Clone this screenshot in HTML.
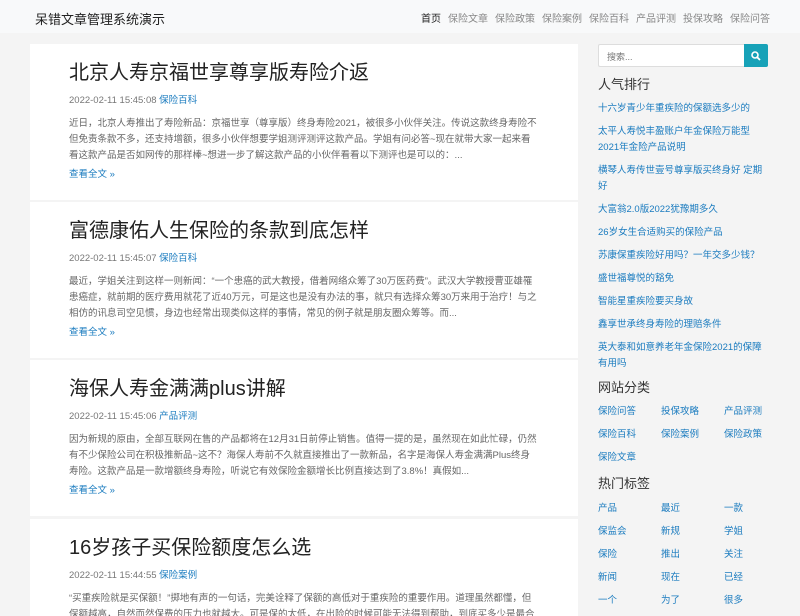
<!DOCTYPE html>
<html><head><meta charset="utf-8"><style>
*{margin:0;padding:0;box-sizing:border-box}
html,body{width:800px;height:616px;overflow:hidden}
body{background:#f4f4f4;font-family:"Liberation Sans","Noto Sans CJK SC",sans-serif;position:relative}
a{color:#1a7bbf;text-decoration:none}
.hdr{position:absolute;left:0;top:0;width:800px;height:33px;background:#f8f9fa}
.logo{position:absolute;left:35px;top:9px;font-size:13px;color:#222}
.nav{position:absolute;right:30px;top:10px;font-size:10px;color:#888;white-space:nowrap}
.nav span{margin-left:7px}
.nav .on{color:#222}
.art{position:absolute;left:30px;width:548px;height:156px;background:#fff;padding:17px 0 0 39px;overflow:hidden}
.art h2{font-size:20px;font-weight:normal;color:#222;line-height:24px;height:24px}
.meta{font-size:9.5px;color:#777;margin-top:9px;line-height:14px}
.ex{font-size:9.5px;color:#666;line-height:16px;margin-top:8px;width:470px;height:48px;overflow:hidden}
.more{font-size:9.5px;margin-top:4px;line-height:14px}
.side{position:absolute;left:598px;top:44px;width:190px}
.search{height:23px;display:flex;width:170px}
.search div{flex:1;background:#fff;border:1px solid #ddd;border-right:0;border-radius:2px 0 0 2px;font-size:9px;color:#777;padding:5px 8px}
.search b{width:24px;background:#17a2b8;border-radius:0 2px 2px 0;display:flex;align-items:center;justify-content:center}
h3{font-size:13px;font-weight:normal;color:#333;line-height:18px}
.lst{width:172px}
.lst a{display:block;font-size:9.5px;line-height:16px;margin-bottom:7px}
.grid{display:flex;flex-wrap:wrap;width:190px}
.grid a{width:63px;font-size:9.5px;line-height:16px;margin-bottom:7px}
</style></head><body>
<div class="hdr"><div class="logo">呆错文章管理系统演示</div>
<div class="nav"><span class="on">首页</span><span>保险文章</span><span>保险政策</span><span>保险案例</span><span>保险百科</span><span>产品评测</span><span>投保攻略</span><span>保险问答</span></div></div>

<div class="art" style="top:44px"><h2>北京人寿京福世享尊享版寿险介返</h2><div class="meta">2022-02-11 15:45:08 <a>保险百科</a></div><div class="ex">近日，北京人寿推出了寿险新品：京福世享（尊享版）终身寿险2021，被很多小伙伴关注。传说这款终身寿险不但免责条款不多，还支持增额，很多小伙伴想要学姐测评测评这款产品。学姐有问必答~现在就带大家一起来看看这款产品是否如网传的那样棒~想进一步了解这款产品的小伙伴看看以下测评也是可以的：...</div><div class="more"><a>查看全文 »</a></div></div>
<div class="art" style="top:202px"><h2>富德康佑人生保险的条款到底怎样</h2><div class="meta">2022-02-11 15:45:07 <a>保险百科</a></div><div class="ex">最近，学姐关注到这样一则新闻：“一个患癌的武大教授，借着网络众筹了30万医药费”。武汉大学教授曹亚雄罹患癌症，就前期的医疗费用就花了近40万元，可是这也是没有办法的事，就只有选择众筹30万来用于治疗！与之相仿的讯息司空见惯，身边也经常出现类似这样的事情，常见的例子就是朋友圈众筹等。而...</div><div class="more"><a>查看全文 »</a></div></div>
<div class="art" style="top:360px"><h2>海保人寿金满满plus讲解</h2><div class="meta">2022-02-11 15:45:06 <a>产品评测</a></div><div class="ex">因为新规的原由，全部互联网在售的产品都将在12月31日前停止销售。值得一提的是，虽然现在如此忙碌，仍然有不少保险公司在积极推新品~这不？海保人寿前不久就直接推出了一款新品，名字是海保人寿金满满Plus终身寿险。这款产品是一款增额终身寿险，听说它有效保险金额增长比例直接达到了3.8%！真假如...</div><div class="more"><a>查看全文 »</a></div></div>
<div class="art" style="top:519px"><h2>16岁孩子买保险额度怎么选</h2><div class="meta">2022-02-11 15:44:55 <a>保险案例</a></div><div class="ex">“买重疾险就是买保额！”掷地有声的一句话，完美诠释了保额的高低对于重疾险的重要作用。道理虽然都懂，但保额越高，自然而然保费的压力也就越大。可是保的太低，在出险的时候可能无法得到帮助，到底买多少是最合适</div></div>

<div class="side">
<div class="search"><div>搜索...</div><b><svg width="10" height="10" viewBox="0 0 10 10"><circle cx="4" cy="4" r="3" fill="none" stroke="#fff" stroke-width="1.6"/><path d="M6.2 6.2L9 9" stroke="#fff" stroke-width="1.8"/></svg></b></div>
<h3 style="margin-top:9px">人气排行</h3>
<div class="lst" style="margin-top:7px">
<a>十六岁青少年重疾险的保额选多少的</a>
<a>太平人寿悦丰盈账户年金保险万能型2021年金险产品说明</a>
<a>横琴人寿传世壹号尊享版买终身好 定期好</a>
<a>大富翁2.0版2022犹豫期多久</a>
<a>26岁女生合适购买的保险产品</a>
<a>苏康保重疾险好用吗？一年交多少钱？</a>
<a>盛世福尊悦的豁免</a>
<a>智能星重疾险要买身故</a>
<a>鑫享世承终身寿险的理赔条件</a>
<a>英大泰和如意养老年金保险2021的保障有用吗</a>
</div>
<h3 style="margin-top:3px">网站分类</h3>
<div class="grid" style="margin-top:7px"><a>保险问答</a><a>投保攻略</a><a>产品评测</a><a>保险百科</a><a>保险案例</a><a>保险政策</a><a>保险文章</a></div>
<h3 style="margin-top:2px">热门标签</h3>
<div class="grid" style="margin-top:8px"><a>产品</a><a>最近</a><a>一款</a><a>保监会</a><a>新规</a><a>学姐</a><a>保险</a><a>推出</a><a>关注</a><a>新闻</a><a>现在</a><a>已经</a><a>一个</a><a>为了</a><a>很多</a></div>
</div>
</body></html>
